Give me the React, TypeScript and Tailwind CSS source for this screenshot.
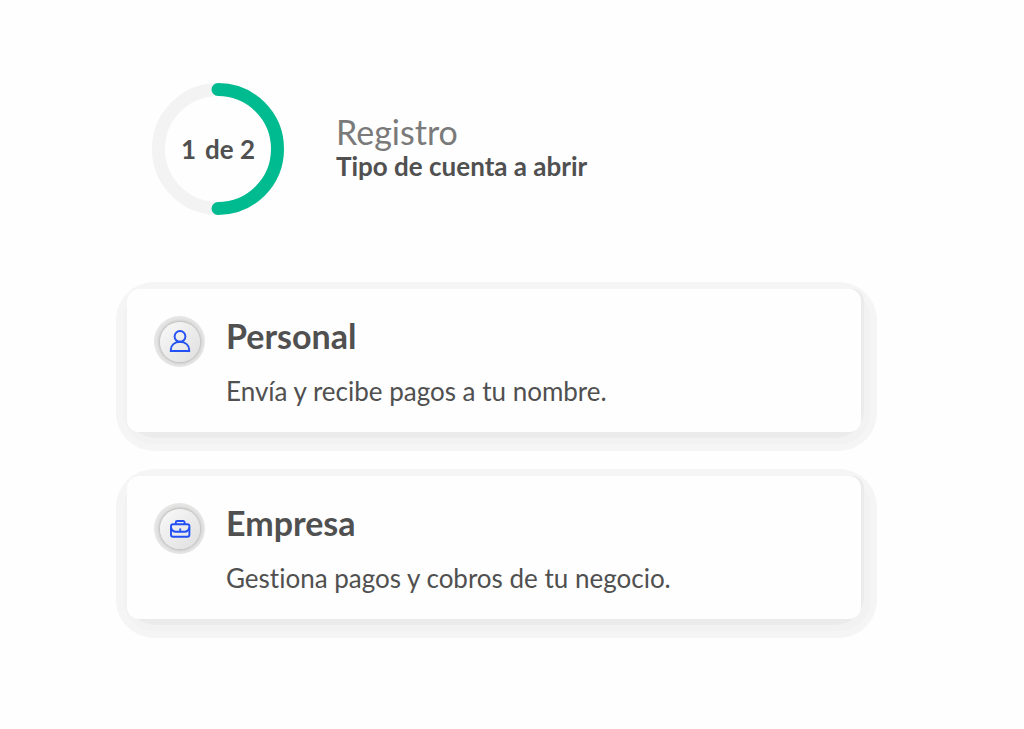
import React from 'react';

interface AccountType {
  id: string;
  title: string;
  description: string;
  icon: React.ReactNode;
}

const accountTypes: AccountType[] = [
  {
    id: 'personal',
    title: 'Personal',
    description: 'Envía y recibe pagos a tu nombre.',
    icon: (
      <svg viewBox="0 0 24 24" className="w-6 h-6" fill="none" stroke="#2250f5" strokeWidth="1.9">
        <circle cx="12" cy="6.4" r="5.4" />
        <path d="M2.8 21v-1.2c0-4.5 3.7-8 9.2-8s9.2 3.5 9.2 8V21z" />
      </svg>
    )
  },
  {
    id: 'empresa',
    title: 'Empresa',
    description: 'Gestiona pagos y cobros de tu negocio.',
    icon: (
      <svg viewBox="0 0 24 24" className="w-6 h-6" fill="none" stroke="#2250f5" strokeWidth="1.9">
        <rect x="3" y="7.3" width="18.400" height="12.400" rx="2" />
        <path d="M7.800 7.300V5.500a1.500 1.500 0 0 1 1.500-1.500h5.800a1.500 1.500 0 0 1 1.500 1.500v1.800" />
        <path d="M3 10.500c.6 2.800 2.400 4.200 5 4.200h8.400c2.600 0 4.400-1.400 5-4.200" />
        <path d="M12.200 11.500v2.400" />
      </svg>
    )
  }
];

const StepProgress: React.FC<{ step: number; total: number }> = ({ step, total }) => (
  <div className="grid size-[132px] shrink-0 place-items-center">
    <svg viewBox="0 0 132 132" className="col-start-1 row-start-1 size-full -rotate-90" fill="none" strokeWidth="13">
      <circle cx="66" cy="66" r="59.5" stroke="#f3f3f3" />
      <circle
        cx="66"
        cy="66"
        r="59.5"
        stroke="#00bb90"
        strokeLinecap="round"
        pathLength="100"
        strokeDasharray={`${(step / total) * 100} 100`}
      />
    </svg>
    <span className="col-start-1 row-start-1 flex gap-[9px] text-[26px] leading-8 font-bold">
      <span>{step}</span>
      <span>de {total}</span>
    </span>
  </div>
);

const AccountCard: React.FC<{ account: AccountType }> = ({ account }) => (
  <button
    type="button"
    className="block w-full rounded-[38px] bg-[#f5f5f5] pt-[7px] pr-[7px] pb-[7px] pl-2 text-left"
  >
    {/* stepped shadow bands, lightest outside */}
    <span className="block rounded-[30px] bg-[#f2f2f2] pr-[6px] pb-[6px] pl-[3px]">
      <span className="block rounded-t-xl rounded-b-[28px] bg-[#ebebeb] pr-[3px] pb-[6px]">
        <span className="flex h-[143px] items-start gap-[21px] rounded-xl bg-[#fefefe] pt-[27px] pl-[27px]">
          <span className="grid size-[51px] shrink-0 place-items-center rounded-full bg-[#e5e5e5]">
            <span className="grid size-10 place-items-center rounded-full bg-linear-to-br from-[#f9f9f9] to-[#dfdfdf] shadow-[0_0_3px_1px_#b8b5b2]">
              {account.icon}
            </span>
          </span>
          <span className="block">
            <span className="block text-[34px] leading-10 font-bold">{account.title}</span>
            <span className="mt-[19px] block text-[26px] leading-8">{account.description}</span>
          </span>
        </span>
      </span>
    </span>
  </button>
);

export default function App() {
  return (
    <div className="min-h-screen bg-[#fefefe] font-['Lato',sans-serif] text-[#505050] [font-variant-ligatures:none]">
      <main className="pt-[83px] pr-[147px] pb-20 pl-[116px]">
        <header className="flex items-center gap-[52px] pl-9">
          <StepProgress step={1} total={2} />
          <div>
            <h1 className="text-[34px] leading-[34px] text-[#7a7a7a]">Registro</h1>
            <h2 className="text-[26px] leading-[34px] font-bold">Tipo de cuenta a abrir</h2>
          </div>
        </header>

        <div className="mt-[67px] flex flex-col gap-[18px]">
          {accountTypes.map((account) => (
            <AccountCard key={account.id} account={account} />
          ))}
        </div>
      </main>
    </div>
  );
}
